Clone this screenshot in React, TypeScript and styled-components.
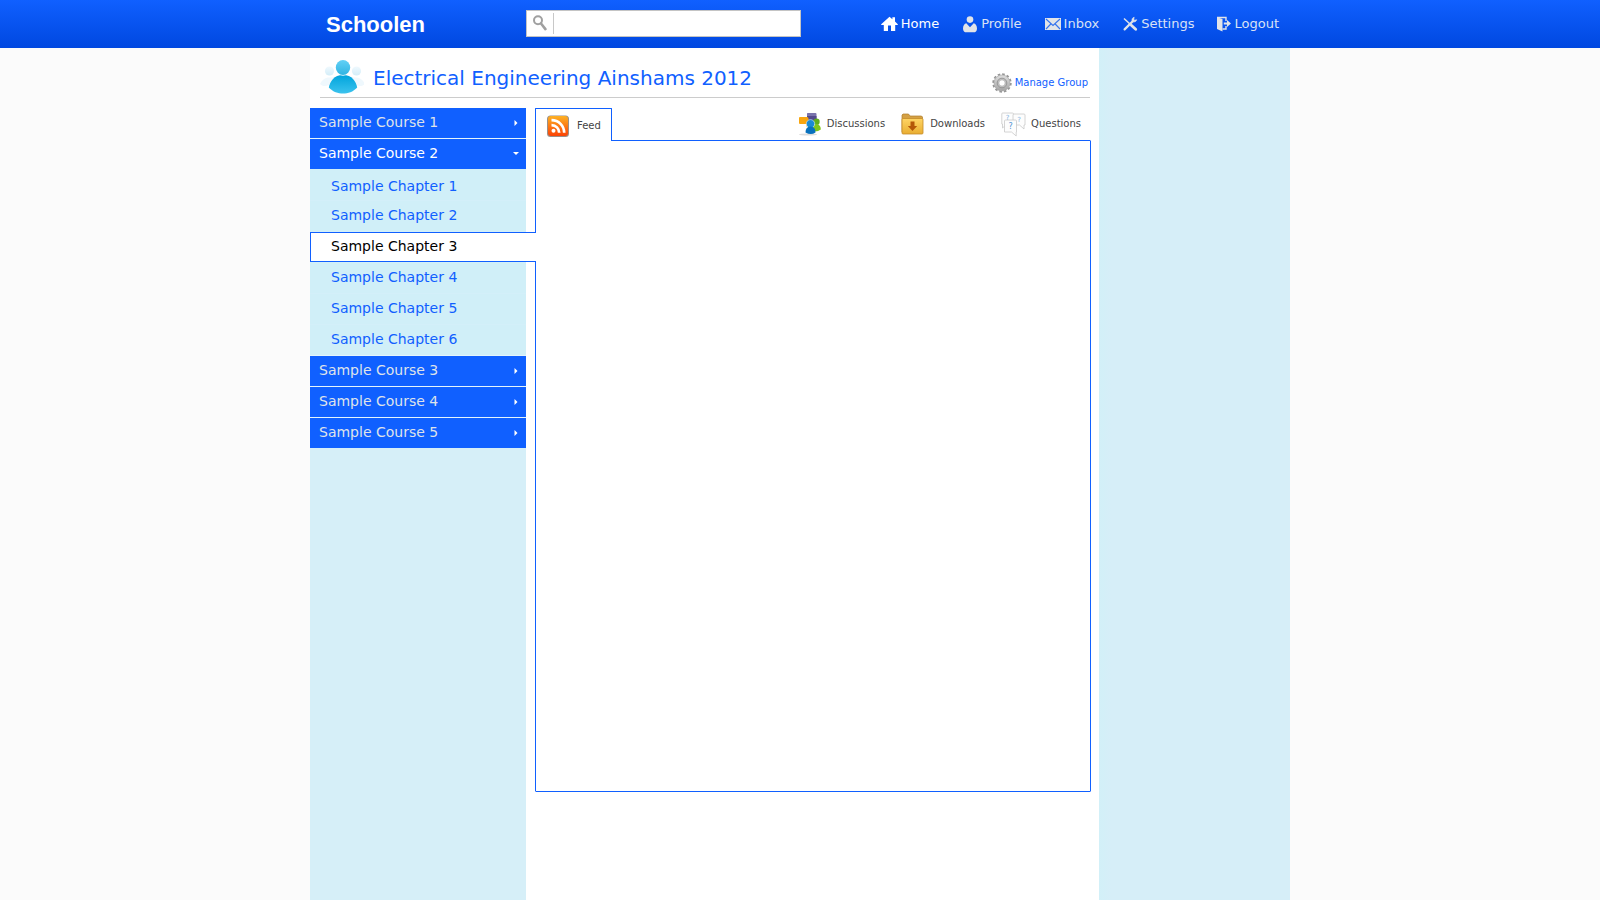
import React from 'react';
import styled, { createGlobalStyle, css } from 'styled-components';

const blue = '#1060ff';

const GlobalStyle = createGlobalStyle`
  *, *::before, *::after { box-sizing: border-box; }
  body {
    margin: 0;
    background: #fbfbfb;
    font-family: Verdana, "DejaVu Sans", sans-serif;
  }
  button, input { font-family: inherit; }
  h1, ul { margin: 0; padding: 0; }
  ul { list-style: none; }
  a { text-decoration: none; }
  svg { display: block; flex: none; }
`;

const Page = styled.div`
  min-height: 100vh;
  display: flex;
  flex-direction: column;
`;

const TopBar = styled.header`
  background: linear-gradient(#1060ff, #0048e0);
`;

const TopBarInner = styled.div`
  width: 100%;
  max-width: 980px;
  height: 48px;
  margin: 0 auto;
  padding-right: 11px;
  display: flex;
  align-items: center;
`;

const Logo = styled.a`
  width: 216px;
  padding: 2px 0 0 16px;
  font: bold 22px/24px "Liberation Sans", Arial, sans-serif;
  color: #fff;
`;

const SearchForm = styled.form`
  width: 275px;
  height: 27px;
  margin-bottom: 1px;
  padding: 2px 0;
  display: flex;
  align-items: stretch;
  background: #fff;
  border: 1px solid #c4c4c4;
`;

const SearchButton = styled.button`
  width: 27px;
  padding: 0 0 2px 6px;
  border: 0;
  border-right: 1px solid #c8c8c8;
  background: none;
`;

const SearchInput = styled.input`
  flex: 1;
  min-width: 0;
  padding: 0 6px;
  border: 0;
  outline: 0;
  background: none;
  font-size: 13px;
`;

const Nav = styled.nav`
  margin-left: auto;
  display: flex;
  gap: 23px;
`;

const NavLink = styled.a<{ $active?: boolean }>`
  display: flex;
  align-items: center;
  gap: 3px;
  height: 20px;
  font-size: 13px;
  line-height: 20px;
  color: ${(p) => (p.$active ? '#fff' : '#d9e2f5')};
`;

const Body = styled.div`
  flex: 1;
  width: 100%;
  max-width: 980px;
  margin: 0 auto;
  display: flex;
`;

const Main = styled.main`
  flex: 1;
  min-width: 0;
  display: flex;
  flex-direction: column;
  background: #fff;
`;

const RightColumn = styled.aside`
  width: 191px;
  background: linear-gradient(to right, #d2f0f8, #d6eef8 12px);
`;

const GroupHeader = styled.div`
  height: 50px;
  margin: 0 9px 10px 10px;
  padding-top: 8px;
  display: flex;
  align-items: center;
  border-bottom: 1px solid #ccc;
`;

const GroupTitle = styled.h1`
  margin-left: 9px;
  padding-top: 2px;
  font-size: 20px;
  line-height: 24px;
  font-weight: normal;
  color: ${blue};
`;

const ManageLink = styled.a`
  margin-left: auto;
  padding: 12px 2px 0 0;
  display: flex;
  align-items: center;
  gap: 3px;
  font-size: 10px;
  line-height: 20px;
  color: ${blue};
`;

const Columns = styled.div`
  flex: 1;
  display: flex;
`;

const Sidebar = styled.nav`
  width: 216px;
  background: #d6eff8;
`;

const rowText = css`
  font-size: 14px;
  line-height: 18px;
`;

const CourseItem = styled.li`
  & + & > button { border-top: 1px solid #e4f4fc; height: 31px; }
`;

const CourseButton = styled.button<{ $open?: boolean }>`
  ${rowText}
  width: 100%;
  height: 30px;
  padding: 0 6px 2px 9px;
  display: flex;
  align-items: center;
  justify-content: space-between;
  border: 0;
  background: ${blue};
  color: ${(p) => (p.$open ? '#fff' : '#dfe3ea')};
`;

const ChapterList = styled.ul`
  padding-top: 3px;
  background: #d0eff8;
`;

const ChapterItem = styled.li`
  height: 31px;
  border-bottom: 1px solid #d3eff9;
  &:first-child { height: 29px; }
  &:last-child { height: 30px; border-bottom: 0; }
`;

const ChapterLink = styled.a<{ $selected?: boolean }>`
  ${rowText}
  height: 30px;
  padding: 5px 0 0 21px;
  display: block;
  color: ${blue};
  ${(p) =>
    p.$selected &&
    css`
      position: relative;
      margin-right: -10px;
      padding: 4px 0 0 20px;
      border: 1px solid ${blue};
      border-right: 0;
      background: #fff;
      color: #000;
    `}
`;

const Content = styled.section`
  flex: 1;
  min-width: 0;
  padding: 0 8px 0 9px;
`;

const TabBar = styled.div`
  height: 32px;
  display: flex;
  justify-content: space-between;
`;

const TabGroup = styled.div`
  display: flex;
  gap: 16px;
  padding-right: 10px;
`;

const Tab = styled.button<{ $active?: boolean }>`
  height: 32px;
  padding: 0;
  display: flex;
  align-items: center;
  gap: 5px;
  border: 0;
  background: none;
  font-size: 10px;
  line-height: 14px;
  color: #444;
  ${(p) =>
    p.$active &&
    css`
      position: relative;
      height: 33px;
      padding: 2px 10px 0;
      gap: 7px;
      border: 1px solid ${blue};
      border-bottom: 0;
      border-radius: 1px 1px 0 0;
      background: #fff;
    `}
`;

const Panel = styled.div`
  min-height: 652px;
  background: #fff;
  border: 1px solid ${blue};
  border-radius: 0 1px 1px 1px;
`;

const SearchIcon = () => (
  <svg width="14" height="16" viewBox="0 0 14 16" fill="none" stroke="#a0a0a0">
    <circle cx="5" cy="5.2" r="4" strokeWidth="2" />
    <path d="M8 8.5l4.4 5.6" strokeWidth="2.6" strokeLinecap="round" />
  </svg>
);

const HomeIcon = () => (
  <svg width="17" height="16" viewBox="0 0 17 16" fill="#fff">
    <path d="M8.5.8L11.4 3.300V1.200H14V5.600L16.800 8.200V9H14.200V15H10V9.500H7V15H2.800V9H.2V8.200z" />
  </svg>
);

const ProfileIcon = () => (
  <svg width="16" height="17" viewBox="0 0 16 17" fill="#e2e4e8">
    <circle cx="8" cy="3.600" r="3.300" />
    <path d="M4.300 7.200L8 11.200L11.700 7.200C13.500 7.600 15 9.600 15 12.500C15 15.500 13.500 16.300 11.500 16.300H4.500C2.500 16.300 1 15.500 1 12.500C1 9.600 2.500 7.600 4.300 7.200z" />
  </svg>
);

const InboxIcon = () => (
  <svg width="16" height="12" viewBox="0 0 16 12">
    <rect width="16" height="12" fill="#e2e4e8" />
    <path d="M1 1l7 6.500L15 1M1 11l4.800-5M15 11l-4.800-5" fill="none" stroke="#3674ee" strokeWidth="1.100" />
  </svg>
);

const SettingsIcon = () => (
  <svg width="16" height="16" viewBox="0 0 16 16" fill="none" stroke="#dfe3ea">
    <path d="M2 2.500L8.500 8.500" strokeWidth="1.500" />
    <path d="M9.300 9.300L13.700 13.300" strokeWidth="2.800" strokeLinecap="round" />
    <path d="M2.600 13.400L10.500 5.500" strokeWidth="2.200" strokeLinecap="round" />
    <path d="M12.200 1.200C10 1.800 9.400 3.700 10.300 5.600C12.200 6.500 14.200 5.700 14.700 3.700L12.600 4.200L11.800 3.300z" fill="#dfe3ea" strokeWidth=".6" />
  </svg>
);

const LogoutIcon = () => (
  <svg width="14" height="16" viewBox="1 0 14 16">
    <path d="M1 1.500H10V5M10 10V13H6.500" fill="none" stroke="#e2e4e8" strokeWidth="1.400" />
    <path d="M1 1.200L6.500 3V15.500L1 13z" fill="#e2e4e8" />
    <path d="M7.800 6.600H11V4L15 7.500L11 11V8.400H7.800z" fill="#e2e4e8" />
  </svg>
);

const GroupIcon = () => (
  <svg width="44" height="36" viewBox="0 0 44 36">
    <defs>
      <linearGradient id="head" x1="0" y1="0" x2="0" y2="1">
        <stop offset="0" stopColor="#62d0f6" />
        <stop offset="1" stopColor="#30b4e2" />
      </linearGradient>
      <linearGradient id="torso" x1="0" y1="0" x2="0" y2="1">
        <stop offset="0" stopColor="#00a4dc" />
        <stop offset="1" stopColor="#3cc3ee" />
      </linearGradient>
      <linearGradient id="pale" x1="0" y1="0" x2="0" y2="1">
        <stop offset="0" stopColor="#f0f9fe" />
        <stop offset="1" stopColor="#d3edf8" />
      </linearGradient>
    </defs>
    <g fill="url(#pale)">
      <circle cx="9.500" cy="12" r="4.600" />
      <circle cx="36.500" cy="12" r="4.600" />
    </g>
    <path d="M0 25C2 21 5 18.500 9 18.500H14L9 26C5 28 2 27 0 25zM45 25C43 21 40 18.500 36 18.500H31L36 26C40 28 43 27 45 25z" fill="#eff8fd" />
    <path d="M23 16C32 16 36 22.500 37.200 28.500C33 33 28 34.600 23 34.600S13 33 8.800 28.500C10 22.500 14 16 23 16z" fill="url(#torso)" />
    <ellipse cx="23" cy="8.500" rx="8.200" ry="8.300" fill="#fff" />
    <ellipse cx="23" cy="8.500" rx="7.200" ry="7.600" fill="url(#head)" />
  </svg>
);

const GearIcon = () => (
  <svg width="20" height="20" viewBox="0 0 20 20">
    <defs>
      <linearGradient id="metal" x1="0" y1="0" x2="0" y2="1">
        <stop offset="0" stopColor="#dedede" />
        <stop offset="1" stopColor="#a4a4a4" />
      </linearGradient>
    </defs>
    <circle cx="10" cy="10" r="8.800" fill="none" stroke="#959595" strokeWidth="1.800" strokeDasharray="2.600 2" />
    <circle cx="10" cy="10" r="8" fill="url(#metal)" stroke="#a0a0a0" strokeWidth=".6" />
    <circle cx="10" cy="10" r="4.800" fill="#c4c4c4" stroke="#8c8c8c" strokeWidth=".8" />
    <circle cx="10" cy="10" r="3.200" fill="#fff" stroke="#999" strokeWidth=".6" />
  </svg>
);

const FeedIcon = () => (
  <svg width="24" height="24" viewBox="0 0 24 24">
    <defs>
      <linearGradient id="orange" x1="0" y1="0" x2="0" y2="1">
        <stop offset="0" stopColor="#fdb124" />
        <stop offset="1" stopColor="#fb4306" />
      </linearGradient>
    </defs>
    <rect x="1" y="1.500" width="22" height="21.500" rx="3.500" fill="#99908a" />
    <rect x="2" y="2" width="20" height="20" rx="3" fill="url(#orange)" />
    <circle cx="7.500" cy="16.800" r="2" fill="#fff" />
    <path d="M5.500 11.200C9.900 11.200 13.200 14.500 13.200 18.800M5.500 6.200C12.700 6.200 18.200 11.700 18.200 18.800" fill="none" stroke="#fff" strokeWidth="2.700" />
  </svg>
);

const DiscussionsIcon = () => (
  <svg width="24" height="24" viewBox="0 0 24 24">
    <ellipse cx="10" cy="22.500" rx="9" ry="1" fill="#ddd" />
    <path d="M9.500 1H17.500Q18.500 1 18.500 2V8L14 10L9 7V2Q9 1 9.500 1z" fill="#7a73ac" />
    <path d="M9 4H18.500V8L14 10L9 7z" fill="#534b8c" />
    <circle cx="18.500" cy="9.700" r="3.200" fill="#5fae1c" />
    <path d="M15 19.500V15Q16 12 18.500 12Q22.800 12.500 22.800 17.500Q20 20 15 19.500z" fill="#80c51b" />
    <path d="M2 5H9Q10.500 5 10.500 6.500V12L8.500 15V12H2Q1 12 1 11V6Q1 5 2 5z" fill="#f8a60f" />
    <circle cx="12.500" cy="11.800" r="4.200" fill="#1a8ad4" stroke="#fff" strokeWidth=".5" />
    <path d="M12.500 14.500Q17.500 14.500 17.500 20.500Q13 23.500 7.500 20.500Q7.500 14.500 12.500 14.500z" fill="#0871bd" />
  </svg>
);

const DownloadsIcon = () => (
  <svg width="24" height="24" viewBox="0 0 24 24">
    <defs>
      <linearGradient id="folder" x1="0" y1="0" x2="0" y2="1">
        <stop offset="0" stopColor="#ffd564" />
        <stop offset="1" stopColor="#e9ad31" />
      </linearGradient>
    </defs>
    <path d="M1 20V3L2 2H7.500L9 4H20.500L21.500 5V20z" fill="#d4a145" stroke="#af7b2a" strokeWidth=".7" />
    <rect x="1" y="6.500" width="21" height="15.500" rx="1" fill="url(#folder)" stroke="#c48b2a" strokeWidth=".8" />
    <path d="M9.500 9.500H13.500V14H16.200L11.500 19L6.800 14H9.500z" fill="#b45708" />
  </svg>
);

const QuestionsIcon = () => (
  <svg width="25" height="25" viewBox="0 0 25 25">
    <g fill="#fdfdfd" stroke="#c9c9c9" strokeWidth=".8">
      <path d="M1.500 1H11.500Q12.500 1 12.500 2V12H6L1.500 16V12H.8V2Q.8 1 1.500 1z" />
      <path d="M13 2H23Q24 2 24 3V13H23V17L18.500 13H12V3Q12 2 13 2z" />
      <path d="M4.500 8H14.500Q15.500 8 15.500 9V20H15.200V24L10.500 20H3.500V9Q3.500 8 4.500 8z" />
    </g>
    <g fontFamily="DejaVu Sans, sans-serif" textAnchor="middle" fill="#7fb1df">
      <text x="6.500" y="7.500" fontSize="7">?</text>
      <text x="18" y="10" fontSize="7">?</text>
      <text x="9.500" y="17" fontSize="8" fill="#4f93d2">?</text>
    </g>
  </svg>
);

const Arrow = ({ open }: { open?: boolean }) => (
  <svg width="8" height="8" viewBox="0 0 8 8" fill="#fff">
    {open ? <path d="M1 3H7L4 6z" /> : <path d="M2.500 2V8L5.500 5z" />}
  </svg>
);

const navItems = [
  { label: 'Home', Icon: HomeIcon, active: true },
  { label: 'Profile', Icon: ProfileIcon },
  { label: 'Inbox', Icon: InboxIcon },
  { label: 'Settings', Icon: SettingsIcon },
  { label: 'Logout', Icon: LogoutIcon },
];

const tabs = [
  { label: 'Discussions', Icon: DiscussionsIcon },
  { label: 'Downloads', Icon: DownloadsIcon },
  { label: 'Questions', Icon: QuestionsIcon },
];

const courses = [1, 2, 3, 4, 5];
const chapters = [1, 2, 3, 4, 5, 6];
const openCourse = 2;
const selectedChapter = 3;

export default function App() {
  return (
    <Page>
      <GlobalStyle />
      <TopBar>
        <TopBarInner>
          <Logo href="#">Schoolen</Logo>
          <SearchForm role="search">
            <SearchButton type="button" aria-label="Search">
              <SearchIcon />
            </SearchButton>
            <SearchInput type="text" aria-label="Search" />
          </SearchForm>
          <Nav>
            {navItems.map(({ label, Icon, active }) => (
              <NavLink key={label} href="#" $active={active}>
                <Icon />
                {label}
              </NavLink>
            ))}
          </Nav>
        </TopBarInner>
      </TopBar>
      <Body>
        <Main>
          <GroupHeader>
            <GroupIcon />
            <GroupTitle>Electrical Engineering Ainshams 2012</GroupTitle>
            <ManageLink href="#">
              <GearIcon />
              Manage Group
            </ManageLink>
          </GroupHeader>
          <Columns>
            <Sidebar>
              <ul>
                {courses.map((n) => {
                  const open = n === openCourse;
                  return (
                    <CourseItem key={n}>
                      <CourseButton type="button" $open={open} aria-expanded={open}>
                        Sample Course {n}
                        <Arrow open={open} />
                      </CourseButton>
                      {open && (
                        <ChapterList>
                          {chapters.map((c) => (
                            <ChapterItem key={c}>
                              <ChapterLink href="#" $selected={c === selectedChapter}>
                                Sample Chapter {c}
                              </ChapterLink>
                            </ChapterItem>
                          ))}
                        </ChapterList>
                      )}
                    </CourseItem>
                  );
                })}
              </ul>
            </Sidebar>
            <Content>
              <TabBar>
                <Tab type="button" $active>
                  <FeedIcon />
                  Feed
                </Tab>
                <TabGroup>
                  {tabs.map(({ label, Icon }) => (
                    <Tab key={label} type="button">
                      <Icon />
                      {label}
                    </Tab>
                  ))}
                </TabGroup>
              </TabBar>
              <Panel />
            </Content>
          </Columns>
        </Main>
        <RightColumn />
      </Body>
    </Page>
  );
}
